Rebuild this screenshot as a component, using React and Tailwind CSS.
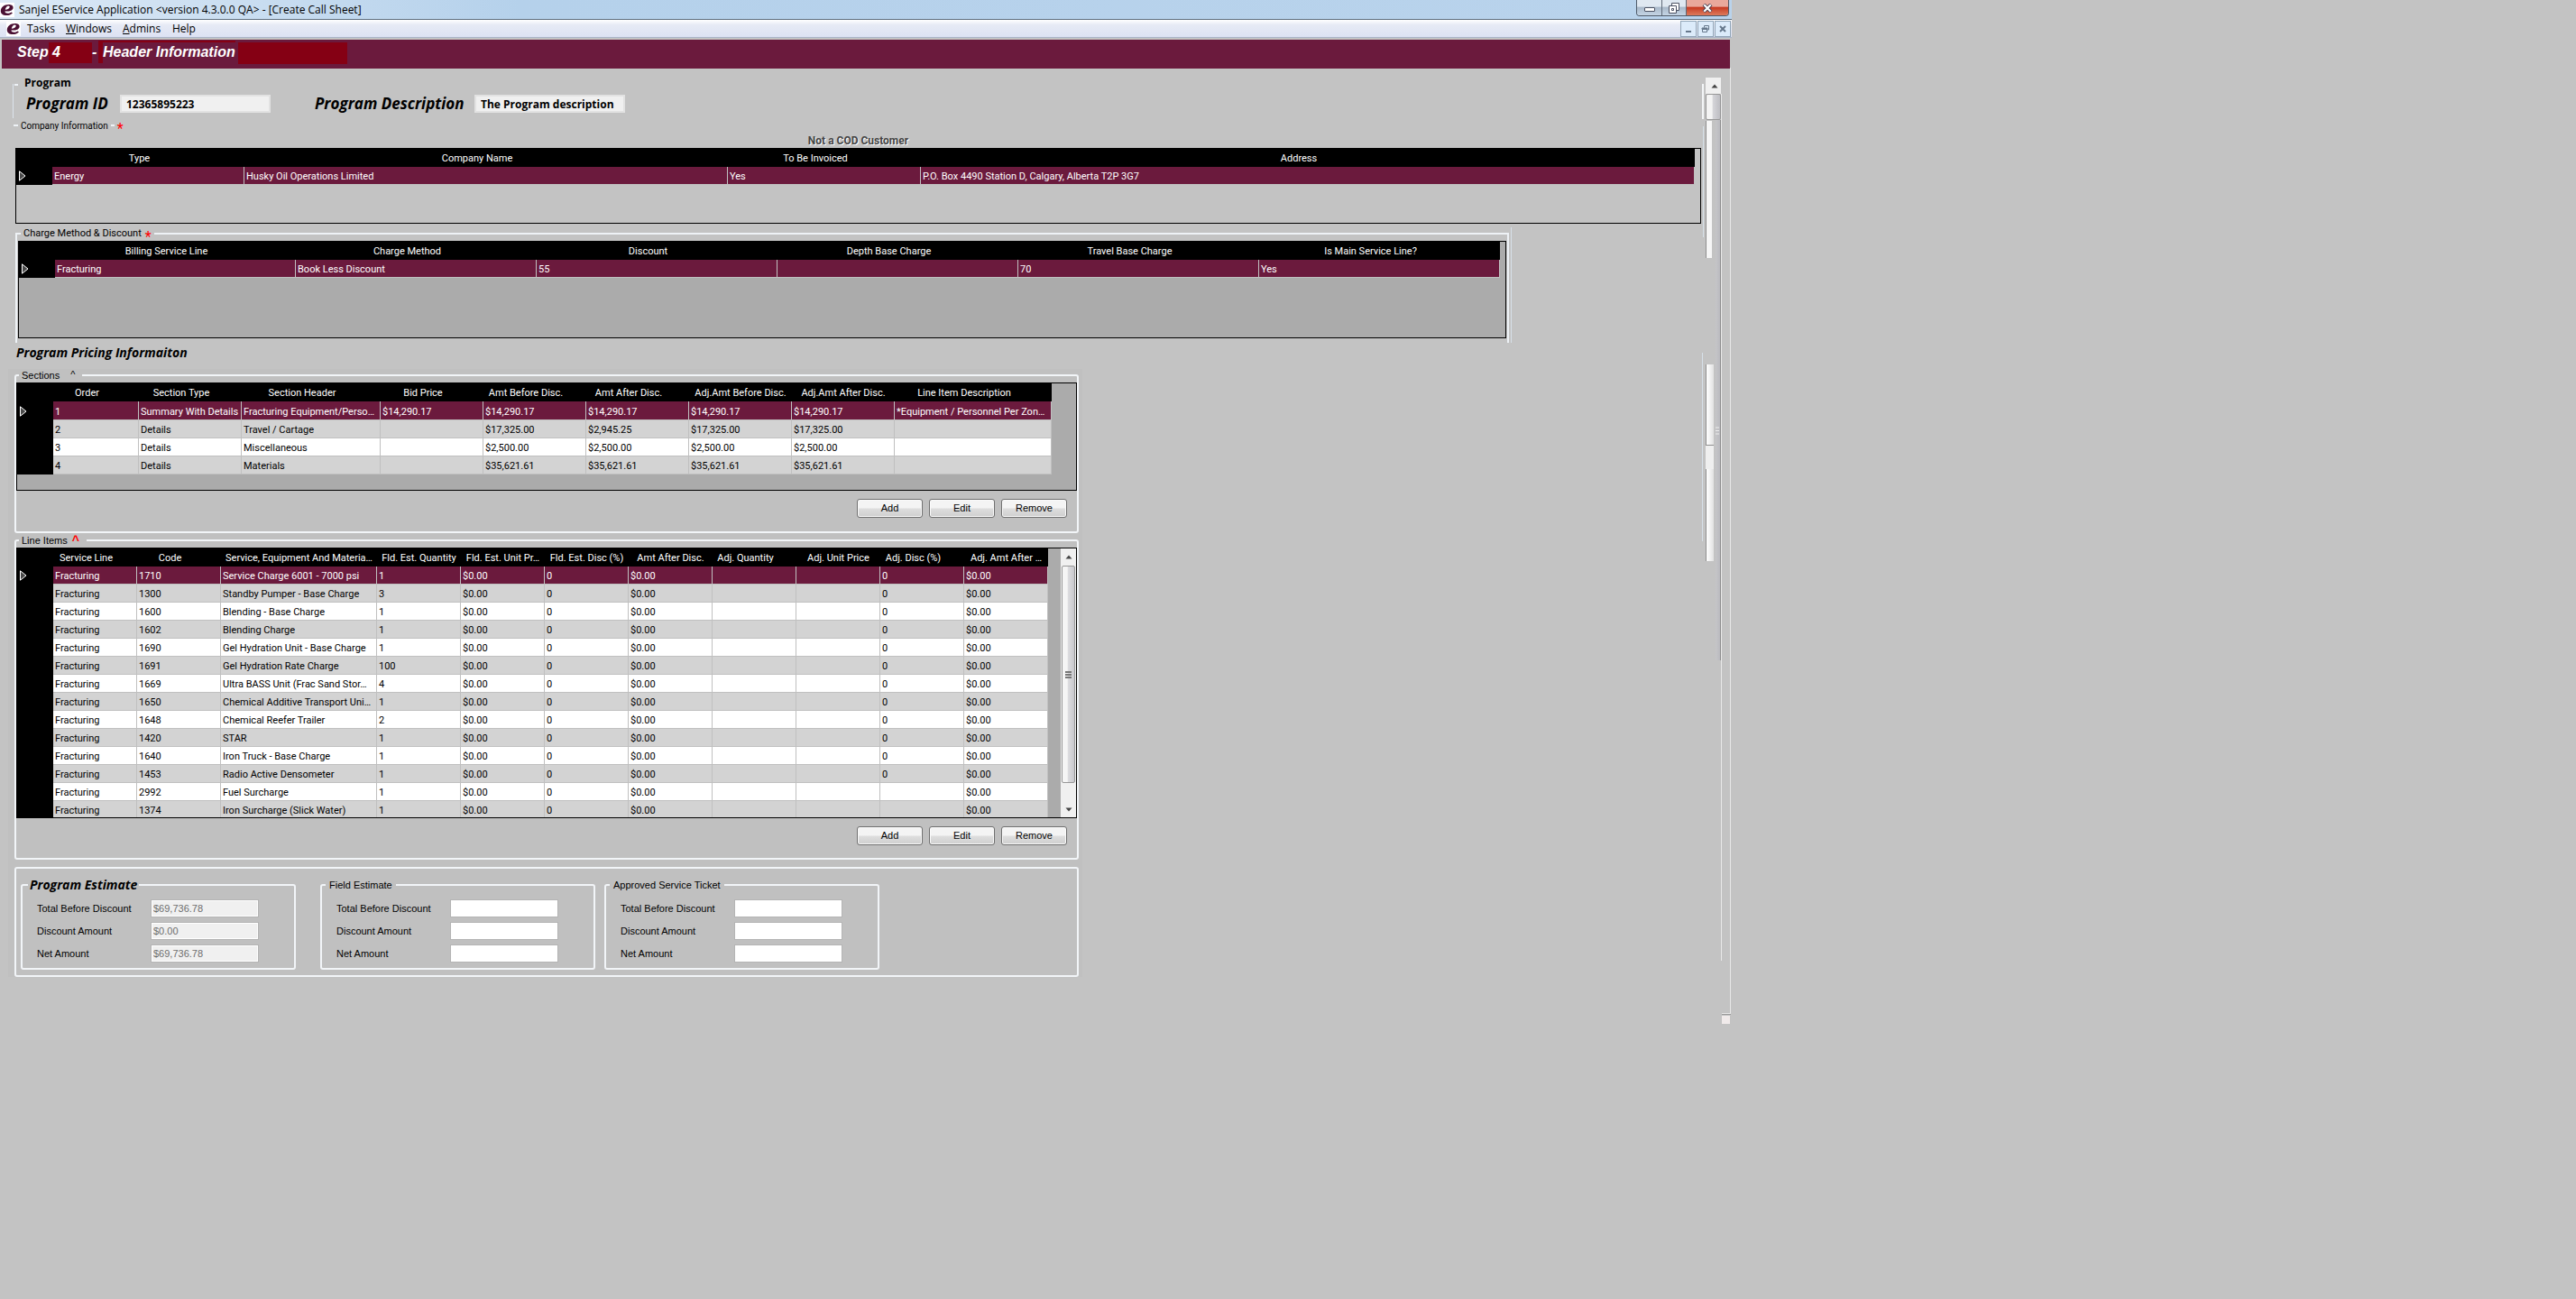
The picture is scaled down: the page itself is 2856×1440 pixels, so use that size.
import React from "react";

const sectionColumns = [
  { label: "Order", width: 95 },
  { label: "Section Type", width: 114 },
  { label: "Section Header", width: 154 },
  { label: "Bid Price", width: 114 },
  { label: "Amt Before Disc.", width: 114 },
  { label: "Amt After Disc.", width: 114 },
  { label: "Adj.Amt Before Disc.", width: 114, flush: true },
  { label: "Adj.Amt After Disc.", width: 114, flush: true },
  { label: "Line Item Description", width: 174 },
];

const sectionRows = [
  ["1", "Summary With Details", "Fracturing Equipment/Perso…", "$14,290.17", "$14,290.17", "$14,290.17", "$14,290.17", "$14,290.17", "*Equipment / Personnel Per Zon…"],
  ["2", "Details", "Travel / Cartage", "", "$17,325.00", "$2,945.25", "$17,325.00", "$17,325.00", ""],
  ["3", "Details", "Miscellaneous", "", "$2,500.00", "$2,500.00", "$2,500.00", "$2,500.00", ""],
  ["4", "Details", "Materials", "", "$35,621.61", "$35,621.61", "$35,621.61", "$35,621.61", ""],
];

const lineColumns = [
  { label: "Service Line", width: 93 },
  { label: "Code", width: 93 },
  { label: "Service, Equipment And Materia…", width: 173, flush: true },
  { label: "Fld. Est. Quantity", width: 93, flush: true },
  { label: "Fld. Est. Unit Pr…", width: 93, flush: true },
  { label: "Fld. Est. Disc (%)", width: 93, flush: true },
  { label: "Amt After Disc.", width: 93, flush: true },
  { label: "Adj. Quantity", width: 93 },
  { label: "Adj. Unit Price", width: 93, flush: true },
  { label: "Adj. Disc (%)", width: 93 },
  { label: "Adj. Amt After …", width: 93, flush: true },
];

const lineItems = [
  ["1710", "Service Charge 6001 - 7000 psi", "1", "0"],
  ["1300", "Standby Pumper - Base Charge", "3", "0"],
  ["1600", "Blending - Base Charge", "1", "0"],
  ["1602", "Blending Charge", "1", "0"],
  ["1690", "Gel Hydration Unit - Base Charge", "1", "0"],
  ["1691", "Gel Hydration Rate Charge", "100", "0"],
  ["1669", "Ultra BASS Unit (Frac Sand Stor…", "4", "0"],
  ["1650", "Chemical Additive Transport Uni…", "1", "0"],
  ["1648", "Chemical Reefer Trailer", "2", "0"],
  ["1420", "STAR", "1", "0"],
  ["1640", "Iron Truck - Base Charge", "1", "0"],
  ["1453", "Radio Active Densometer", "1", "0"],
  ["2992", "Fuel Surcharge", "1", ""],
  ["1374", "Iron Surcharge (Slick Water)", "1", ""],
];

const lineRows = lineItems.map(([code, name, qty, adjDisc]) => [
  "Fracturing", code, name, qty, "$0.00", "0", "$0.00", "", "", adjDisc, "$0.00",
]);

const companyColumns = [
  { label: "Type", width: 213 },
  { label: "Company Name", width: 536 },
  { label: "To Be Invoiced", width: 214 },
  { label: "Address" },
];

const chargeColumns = [
  { label: "Billing Service Line", width: 267 },
  { label: "Charge Method", width: 267 },
  { label: "Discount", width: 267 },
  { label: "Depth Base Charge", width: 267 },
  { label: "Travel Base Charge", width: 267 },
  { label: "Is Main Service Line?" },
];

function Logo() {
  return (
    <svg viewBox="0 0 16 16" className="h-4 w-4 shrink-0 bg-white" aria-hidden="true">
      <path
        d="M5.4 9.4 C9.6 10 14.6 8.8 14.6 5.4 C14.6 3 12.2 2 9.6 2 C5 2 0.8 4.8 0.8 9.2 C0.8 12.4 3.4 14 7 14 C10 14 12.4 13 14 11.4 L12.6 10.4 C10.4 12 5.6 12.4 5.4 9.4 Z M5.8 7.8 C6.2 5.4 7.8 3.6 9.6 3.6 C11.6 3.6 11.2 7.4 5.8 7.8 Z"
        fill="#4a1033"
        fillRule="evenodd"
      />
    </svg>
  );
}

function Required() {
  return <span className="pt-2 text-base leading-none text-[#f00]">*</span>;
}

function Grid({ columns, rows, label, tallFirst }) {
  return (
    <table
      aria-label={label}
      className="w-full table-fixed border-separate border-spacing-0 font-[Roboto,sans-serif] text-[11px] leading-[17px]"
    >
      <colgroup>
        <col width={40} />
        {columns.map((c, i) => (
          <col key={i} width={c.width} />
        ))}
      </colgroup>
      <thead>
        <tr className="h-5 bg-black text-white">
          <td className="p-0" />
          {columns.map((c) => (
            <th
              key={c.label}
              scope="col"
              className={"overflow-hidden p-0 text-center font-normal whitespace-nowrap " + (c.flush ? "" : "pr-5")}
            >
              {c.label}
            </th>
          ))}
        </tr>
      </thead>
      <tbody>
        {rows.map((row, r) => (
          <tr
            key={r}
            className={
              (r === 0 && tallFirst ? "h-[21px] " : "h-5 ") +
              (r === 0 ? "bg-[#6b1a3d] text-white" : r % 2 ? "bg-[#d3d3d3] text-black" : "bg-white text-black")
            }
          >
            <td className="bg-black p-0 pl-[3px]">
              {r === 0 && (
                <svg viewBox="0 0 8 12" className="block h-3 w-2" aria-label="Current row">
                  <path d="M0.5 0.8 L7 6 L0.5 11.2 Z" fill="#4a4a4a" stroke="#fff" />
                </svg>
              )}
            </td>
            {row.map((cell, c) => (
              <td
                key={c}
                className="overflow-hidden border-r border-b border-[#c0c0c0] p-0 pt-0.5 pl-0.5 whitespace-nowrap"
              >
                {cell}
              </td>
            ))}
          </tr>
        ))}
      </tbody>
    </table>
  );
}

function Actions() {
  return (
    <div className="flex justify-end gap-[7px] pt-[9px] pr-[11px]">
      {["Add", "Edit", "Remove"].map((t) => (
        <button
          key={t}
          type="button"
          className="h-[21px] w-[73px] rounded-[3px] border border-[#707070] bg-linear-to-b from-[#f4f4f4] from-45% via-[#dddddd] via-55% to-[#cfcfcf] text-[11px] leading-none text-black inset-ring inset-ring-[#fafafa]"
        >
          {t}
        </button>
      ))}
    </div>
  );
}

function Estimate({ title, emphasis, values, className }) {
  const names = ["Total Before Discount", "Discount Amount", "Net Amount"];
  return (
    <fieldset className={"w-[305px] rounded-[3px] border-2 border-[#f2f5f8] pt-[7px] pb-[6px] pl-4 " + className}>
      <legend
        className={
          emphasis
            ? "-ml-2.5 px-0.5 font-['Open_Sans',sans-serif] text-sm leading-[18px] font-bold italic"
            : "-ml-3 px-1 leading-[18px]"
        }
      >
        {title}
      </legend>
      <div className="flex flex-col gap-[5px]">
        {names.map((n, i) => (
          <label key={n} className="flex h-5 items-center">
            <span className="w-[126px]">{n}</span>
            {values ? (
              <input
                readOnly
                defaultValue={values[i]}
                className="h-5 w-[120px] border border-[#b4b4b4] bg-[#f0f0f0] px-0.5 text-[#6d6d6d] inset-ring inset-ring-white"
              />
            ) : (
              <input defaultValue="" className="h-5 w-[120px] border border-[#b4b4b4] bg-white px-0.5" />
            )}
          </label>
        ))}
      </div>
    </fieldset>
  );
}

function Arrow({ down }) {
  return (
    <svg viewBox="0 0 8 5" className="h-[5px] w-2" aria-hidden="true">
      <path d={down ? "M0.5 0.5 H7.5 L4 4.5 Z" : "M0.5 4.5 H7.5 L4 0.5 Z"} fill="#444" />
    </svg>
  );
}

function TitleBar() {
  return (
    <header className="flex h-[22px] items-start justify-between border-b border-[#5f6f7f] bg-linear-to-r from-[#dce9f6] via-[#b5d1eb] via-30% to-[#b9d3ec]">
      <div className="flex h-5 items-center gap-[5px] pt-0.5">
        <Logo />
        <span className="font-['Open_Sans',sans-serif] text-xs leading-4">
          Sanjel EService Application &lt;version 4.3.0.0 QA&gt; - [Create Call Sheet]
        </span>
      </div>
      <div className="mr-[3px] flex h-[18px] overflow-hidden rounded-b border border-t-0 border-[#4f5a68]">
        <button type="button" aria-label="Minimize" className="flex w-7 items-center justify-center border-r border-[#5f6a78] bg-linear-to-b from-[#dfe8f1] from-40% via-[#a9b9ca] via-50% to-[#c5d5e5] pt-1">
          <span className="h-[5px] w-3 rounded-[1px] border border-[#4b5162] bg-white" />
        </button>
        <button type="button" aria-label="Restore" className="flex w-[27px] items-center justify-center border-r border-[#5f6a78] bg-linear-to-b from-[#dfe8f1] from-40% via-[#a9b9ca] via-50% to-[#c5d5e5]">
          <svg viewBox="0 0 12 12" className="h-3 w-3" aria-hidden="true">
            <path d="M3.5 0.5 H11.5 V8.5 H3.5 Z" fill="#fff" stroke="#4b5162" />
            <path d="M0.5 3.5 H8.5 V11.5 H0.5 Z" fill="#fff" stroke="#4b5162" />
            <path d="M3.5 6.5 H5.5 V8.5 H3.5 Z" fill="none" stroke="#4b5162" />
          </svg>
        </button>
        <button type="button" aria-label="Close" className="flex w-[46px] items-center justify-center bg-linear-to-b from-[#e9a99c] from-40% via-[#c63c23] via-50% to-[#dd7a5c]">
          <svg viewBox="0 0 12 10" className="h-2.5 w-3" aria-hidden="true">
            <path d="M2 1 L10 9 M10 1 L2 9" stroke="#4b4052" strokeWidth="4" />
            <path d="M2.3 1.3 L9.7 8.7 M9.7 1.3 L2.3 8.7" stroke="#fff" strokeWidth="2.2" />
          </svg>
        </button>
      </div>
    </header>
  );
}

function MenuBar() {
  const box = "flex h-[18px] w-[18px] items-center justify-center border border-[#92a6b8] bg-[#dcebfa]";
  return (
    <nav className="flex h-5 items-center justify-between border-b border-[#aab4c8] bg-linear-to-b from-white from-0% via-[#e6eaf5] via-30% to-[#dde2f3] pr-px">
      <div className="flex items-center pl-[7px] font-['Open_Sans',sans-serif] text-xs leading-4">
        <Logo />
        <button type="button" className="ml-[7px] w-[43px] text-left">Tasks</button>
        <button type="button" className="w-[63px] text-left"><u>W</u>indows</button>
        <button type="button" className="w-[55px] text-left"><u>A</u>dmins</button>
        <button type="button" className="text-left">Help</button>
      </div>
      <div className="flex gap-px">
        <button type="button" aria-label="Minimize document" className={box}>
          <svg viewBox="0 0 10 10" className="h-2.5 w-2.5" aria-hidden="true"><path d="M2 7 H8 V9 H2 Z" fill="#66788c" /></svg>
        </button>
        <button type="button" aria-label="Restore document" className={box}>
          <svg viewBox="0 0 10 10" className="h-2.5 w-2.5" aria-hidden="true">
            <path d="M3.5 3.5 V1.5 H8.5 V6 H6.5" fill="none" stroke="#66788c" />
            <path d="M1.5 4.5 H6.5 V8.5 H1.5 Z M1 4 H7 V5.5 H1 Z" fill="none" stroke="#66788c" />
          </svg>
        </button>
        <button type="button" aria-label="Close document" className={box}>
          <svg viewBox="0 0 10 10" className="h-2.5 w-2.5" aria-hidden="true"><path d="M2 2 L8 8 M8 2 L2 8" stroke="#66788c" strokeWidth="2" /></svg>
        </button>
      </div>
    </nav>
  );
}

function Banner() {
  return (
    <div className="mx-0.5 mt-0.5 flex h-8 bg-[#6b1a3d] font-['Liberation_Sans',sans-serif] text-base font-bold text-white italic">
      <h1 className="flex items-start pl-4">
        <span className="w-9 pl-px leading-[27px]">Step</span>
        <span className="mt-[3px] h-[23px] w-12 bg-[#850014] pl-1 leading-[21px]">4</span>
        <span className="w-[7px] leading-[27px]">-</span>
        <span className="mt-px h-[25px] border-t-2 border-l-[5px] border-[#850014] leading-[21px]">
          Header Information
        </span>
      </h1>
      <div className="mt-[3px] ml-[3px] h-6 w-[121px] bg-[#850014]" />
    </div>
  );
}

function Rail() {
  return (
    <aside className="flex w-[34px] shrink-0 items-start" aria-label="Page scroll">
      <div className="w-[5px] pl-px">
        <div className="mt-[17px] h-[39px] w-0.5 bg-[#f4f6f8]" />
        <div className="mt-2 ml-px h-[123px] w-px bg-[#d6e0e8]" />
        <div className="mt-[128px] h-[209px] w-px bg-[#d6e0e8]" />
      </div>
      <div className="mt-2.5 w-[17px]">
        <button type="button" aria-label="Scroll up" className="flex h-[18px] w-full items-center justify-end bg-[#f0f0f0] pr-[3px]">
          <Arrow />
        </button>
        <div className="h-[29px] rounded-[2px] border border-[#979797] bg-linear-to-r from-[#f4f4f4] from-40% via-[#d4d4d8] via-50% to-[#bdbdc2]" />
        <div className="flex">
          <div className="w-[9px]">
            <div className="mt-px h-[152px] w-[7px] border-l border-[#8f8f8f] bg-[#f6f6f6]" />
            <div className="mt-[118px] h-[89px] border-l border-[#8f8f8f] bg-linear-to-r from-white to-[#e2e2e2]" />
            <div className="h-[27px] border-t border-[#8f8f8f] bg-[#efefef]" />
            <div className="h-[102px] border-l border-[#8f8f8f] bg-linear-to-r from-white to-[#e2e2e2]" />
          </div>
          <div className="ml-0.5 flex h-[599px] w-1.5 items-start border-r border-[#8f8f8f] bg-linear-to-r from-[#c6c6c8] to-[#b9b9be] pt-[340px]">
            <svg viewBox="0 0 4 9" className="h-[9px] w-1" aria-hidden="true"><path d="M0 1 H4 M0 4.5 H4 M0 8 H4" stroke="#eee" /></svg>
          </div>
        </div>
      </div>
      <div className="mt-[28px] h-[961px] w-px bg-[#e8e8e8]" />
      <div className="-mt-px w-2.5">
        <div className="h-[1049px] border-r border-b border-[#e6e6e6]" />
        <div className="mb-px h-px bg-[#9a9a9a]" />
        <div className="mr-px h-[9px] bg-[#f0eaea]" />
      </div>
    </aside>
  );
}

export default function App() {
  return (
    <div className="min-h-screen bg-[#c3c3c3] font-['Liberation_Sans',sans-serif] text-[11px] text-black">
      <div className="w-full max-w-[1920px]">
        <TitleBar />
        <MenuBar />
        <Banner />
        <div className="flex items-start">
          <main className="min-w-0 grow">
            <section className="mt-[7px] ml-3.5 flex font-['Open_Sans',sans-serif] font-bold">
              <div className="mt-[10px] h-[38px] w-1.5 border-l border-[#dce4ec]">
                <div className="ml-px h-0.5 bg-[#eef2f6]" />
              </div>
              <div>
                <h2 className="pl-[7px] text-xs leading-[18px]">Program</h2>
                <div className="flex h-7 items-center pl-[9px]">
                  <label htmlFor="pid" className="w-[104px] text-[17px] leading-6 italic">Program ID</label>
                  <input id="pid" defaultValue="12365895223" className="h-5 w-[167px] border-2 border-[#e2e2e2] bg-[#f0f0f0] px-[5px] text-xs" />
                  <label htmlFor="pdesc" className="ml-[49px] w-[177px] text-[17px] leading-6 whitespace-nowrap italic">Program Description</label>
                  <input id="pdesc" defaultValue="The Program description" className="h-5 w-[167px] border-2 border-[#e2e2e2] bg-[#f0f0f0] px-[5px] text-xs" />
                </div>
              </div>
            </section>

            <section className="ml-[15px]">
              <h2 className="mt-px flex h-3.5 items-center gap-[3px] font-[Roboto,sans-serif] text-[10px]">
                <span className="h-0.5 w-[5px] bg-[#eef2f6]" />
                Company Information
                <span className="h-0.5 w-1 bg-[#eef2f6]" />
                <Required />
              </h2>
              <div className="ml-0.5">
                <p className="mt-[3px] text-center font-[Roboto,sans-serif] text-xs leading-[15px] font-bold text-[#444] [text-shadow:1px_1px_0_#fff]">
                  Not a COD Customer
                </p>
                <div className="h-[84px] border border-black pr-[6px]">
                  <Grid
                    label="Company Information"
                    columns={companyColumns}
                    rows={[["Energy", "Husky Oil Operations Limited", "Yes", "P.O. Box 4490 Station D, Calgary, Alberta T2P 3G7"]]}
                  />
                </div>
              </div>
            </section>

            <section className="mt-1 ml-[17px] w-full max-w-[1659px] border-r border-[#d6e0e8] pr-0.5">
              <fieldset className="border-2 border-b-0 border-[#eef2f6] pt-px pr-px pb-[5px] pl-px">
                <legend className="ml-[3px] flex h-3.5 items-center gap-1 px-[3px] font-[Roboto,sans-serif]">
                  Charge Method &amp; Discount
                  <Required />
                </legend>
                <div className="h-[108px] border border-black bg-[#ababab] pr-[6px]">
                  <Grid
                    label="Charge Method and Discount"
                    columns={chargeColumns}
                    rows={[["Fracturing", "Book Less Discount", "55", "", "70", "Yes"]]}
                  />
                </div>
              </fieldset>
            </section>

            <h2 className="mt-px ml-[18px] font-['Open_Sans',sans-serif] text-sm leading-5 font-bold italic">
              Program Pricing Informaiton
            </h2>

            <div className="mt-2 ml-[9px] w-full max-w-[1191px] bg-[#c0c0c0] pr-1 pl-[7px]">
              <fieldset className="rounded-[3px] border-2 border-[#f2f5f8] pt-px pb-[15px]">
                <legend className="ml-[3px] flex h-3.5 items-center gap-3 pr-2 pl-[3px]">
                  Sections <span className="pb-0.5">^</span>
                </legend>
                <div className="h-[120px] border border-black bg-[#ababab]">
                  <div className="w-[1147px]">
                    <Grid label="Sections" columns={sectionColumns} rows={sectionRows} tallFirst />
                  </div>
                </div>
                <Actions />
              </fieldset>

              <fieldset className="mt-px rounded-[3px] border-2 border-[#f2f5f8] pt-px pb-3.5">
                <legend className="ml-[3px] flex h-3.5 items-center gap-[5px] pr-2 pl-[3px]">
                  Line Items <span className="text-sm leading-none font-bold text-[#f00]">^</span>
                </legend>
                <div className="flex h-[300px] overflow-hidden border border-black bg-[#ababab]">
                  <div className="w-[1143px]">
                    <Grid label="Line Items" columns={lineColumns} rows={lineRows} />
                  </div>
                  <div className="ml-auto flex w-[17px] flex-col bg-[#f0f0f0]">
                    <button type="button" aria-label="Scroll up" className="flex h-[19px] items-center justify-center"><Arrow /></button>
                    <div className="mx-px flex h-[241px] flex-col items-center justify-center gap-px rounded-[2px] border border-[#979797] bg-linear-to-r from-[#f5f5f5] from-40% via-[#dcdcdf] via-50% to-[#c8c8cd]">
                      <i className="h-0.5 w-[7px] bg-[#777]" />
                      <i className="h-0.5 w-[7px] bg-[#777]" />
                      <i className="h-0.5 w-[7px] bg-[#777]" />
                    </div>
                    <button type="button" aria-label="Scroll down" className="mt-auto flex h-[17px] items-center justify-center"><Arrow down /></button>
                  </div>
                </div>
                <Actions />
              </fieldset>

              <div className="mt-2 flex items-start rounded-[3px] border-2 border-[#f2f5f8] pt-[9px] pb-[6px] pl-[5px]">
                <Estimate title="Program Estimate" emphasis values={["$69,736.78", "$0.00", "$69,736.78"]} className="" />
                <Estimate title="Field Estimate" className="ml-[27px]" />
                <Estimate title="Approved Service Ticket" className="ml-2.5" />
              </div>
            </div>
          </main>
          <Rail />
        </div>
      </div>
    </div>
  );
}
